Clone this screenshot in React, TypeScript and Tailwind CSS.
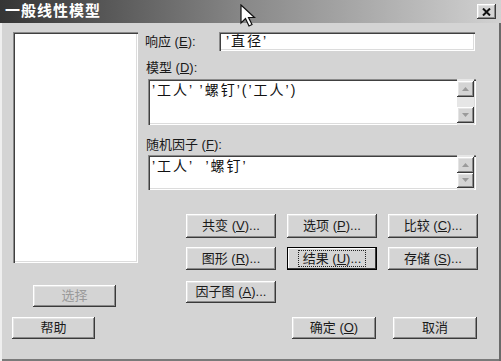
import React from 'react';

const raised =
  'bg-[#d4d4d4] shadow-[inset_-1px_-1px_#3a3a3a,inset_1px_1px_#ffffff,inset_-2px_-2px_#8a8a8a,inset_2px_2px_#e4e4e4]';
const sunken =
  'bg-white shadow-[inset_1px_1px_#8a8a8a,inset_2px_2px_#404040,inset_-1px_-1px_#ffffff,inset_-2px_-2px_#dcdcdc]';

function Btn({
  children,
  className = '',
  disabled = false,
  focused = false,
}: {
  children: React.ReactNode;
  className?: string;
  disabled?: boolean;
  focused?: boolean;
}) {
  return (
    <div
      className={`${raised} flex items-center justify-center text-[13px] ${
        disabled ? 'text-[#9a9a9a]' : 'text-[#1a1a1a]'
      } ${focused ? 'shadow-[inset_1px_1px_#000,inset_-1px_-1px_#000,inset_-2px_-2px_#3a3a3a,inset_2px_2px_#ffffff]' : ''} ${className}`}
    >
      {focused ? (
        <span className="border border-dotted border-[#222] px-[4px] leading-[15px]">{children}</span>
      ) : (
        children
      )}
    </div>
  );
}

function ScrollBox({ text, className = '' }: { text: string; className?: string }) {
  return (
    <div className={`${sunken} flex ${className}`}>
      <div className="flex-1 whitespace-pre pl-[4px] pt-[2px] text-[14px] leading-[18px] tracking-[2px] text-[#111]">
        {text}
      </div>
      <div className="mr-[2px] flex w-[17px] flex-col justify-between bg-[#e6e6e6] py-[2px]">
        <div className={`${raised} flex h-[16px] items-center justify-center`}>
          <svg width="7" height="4" viewBox="0 0 7 4">
            <path d="M3.5 0 L7 4 L0 4 Z" fill="#9a9a9a" />
          </svg>
        </div>
        <div className={`${raised} flex h-[16px] items-center justify-center`}>
          <svg width="7" height="4" viewBox="0 0 7 4">
            <path d="M0 0 L7 0 L3.5 4 Z" fill="#9a9a9a" />
          </svg>
        </div>
      </div>
    </div>
  );
}

export default function App() {
  return (
    <div
      className="relative h-[361px] w-[501px] overflow-hidden bg-[#d4d4d4] shadow-[inset_-2px_0_#6a6a6a,inset_2px_0_#efefef,inset_0_-2px_#7a7a7a]"
      style={{ fontFamily: '"Liberation Sans", "Noto Sans CJK SC", sans-serif' }}
    >
      {/* Title bar */}
      <div className="flex h-[23px] items-center justify-between bg-gradient-to-r from-[#353535] via-[#8a8a8a] to-[#d2d2d2] pl-[5px] pr-[5px]">
        <span className="text-[15px] font-bold tracking-[1px] text-white">一般线性模型</span>
        <div className={`${raised} flex h-[15px] w-[19px] items-center justify-center`}>
          <svg width="9" height="8" viewBox="0 0 9 8">
            <path d="M1 0.5 L8 7.5 M8 0.5 L1 7.5" stroke="#111" strokeWidth="2" />
          </svg>
        </div>
      </div>

      <div className="flex pl-[13px] pt-[9px]">
        {/* Left column */}
        <div className="flex w-[125px] flex-col">
          <div className={`${sunken} h-[231px]`} />
          <Btn disabled className="ml-[20px] mt-[22px] h-[22px] w-[83px]">
            选择
          </Btn>
        </div>

        {/* Right column */}
        <div className="ml-[7px] flex w-[332px] flex-col">
          <div className="flex h-[19px] items-center">
            <span className="w-[74px] text-[13px] text-[#1a1a1a]">
              响应 (<u>E</u>):
            </span>
            <div
              className={`${sunken} flex h-[19px] w-[256px] items-center whitespace-pre pl-[7px] text-[14px] tracking-[2px] text-[#111]`}
            >
              ’直径’
            </div>
          </div>
          <span className="mt-[9px] pl-[1px] text-[13px] leading-[16px] text-[#1a1a1a]">
            模型 (<u>D</u>):
          </span>
          <ScrollBox text="’工人’ ’螺钉’(’工人’)" className="ml-[3px] mt-[3px] h-[46px] w-[328px]" />
          <span className="mt-[12px] pl-[1px] text-[13px] leading-[16px] text-[#1a1a1a]">
            随机因子 (<u>F</u>):
          </span>
          <ScrollBox text="’工人’  ’螺钉’" className="ml-[3px] mt-[2px] h-[35px] w-[328px]" />

          <div className="ml-[41px] mt-[24px] grid grid-cols-[90px_90px_90px] gap-x-[11px] gap-y-[9px]">
            <Btn className="h-[24px]">
              共变 (<u>V</u>)...
            </Btn>
            <Btn className="h-[24px]">
              选项 (<u>P</u>)...
            </Btn>
            <Btn className="h-[24px]">
              比较 (<u>C</u>)...
            </Btn>
            <Btn className="h-[23px]">
              图形 (<u>R</u>)...
            </Btn>
            <Btn focused className="h-[23px]">
              结果 (<u>U</u>)...
            </Btn>
            <Btn className="h-[23px]">
              存储 (<u>S</u>)...
            </Btn>
            <Btn className="mt-[2px] h-[22px]">
              因子图 (<u>A</u>)...
            </Btn>
          </div>
        </div>
      </div>

      {/* Bottom row */}
      <div className="mt-[10px] flex pl-[12px]">
        <Btn className="h-[22px] w-[83px]">帮助</Btn>
        <Btn className="ml-[197px] h-[22px] w-[84px]">
          确定 (<u>O</u>)
        </Btn>
        <Btn className="ml-[17px] h-[22px] w-[84px]">取消</Btn>
      </div>

      {/* Mouse cursor */}
      <svg className="absolute left-[240px] top-[4px]" width="16" height="25" viewBox="0 0 16 25">
        <path d="M1 1 L1 19 L5.5 14.5 L9 22 L12 20.5 L8.5 13.5 L14.5 13.5 Z" fill="#fff" stroke="#111" strokeWidth="1.2" />
      </svg>
    </div>
  );
}
